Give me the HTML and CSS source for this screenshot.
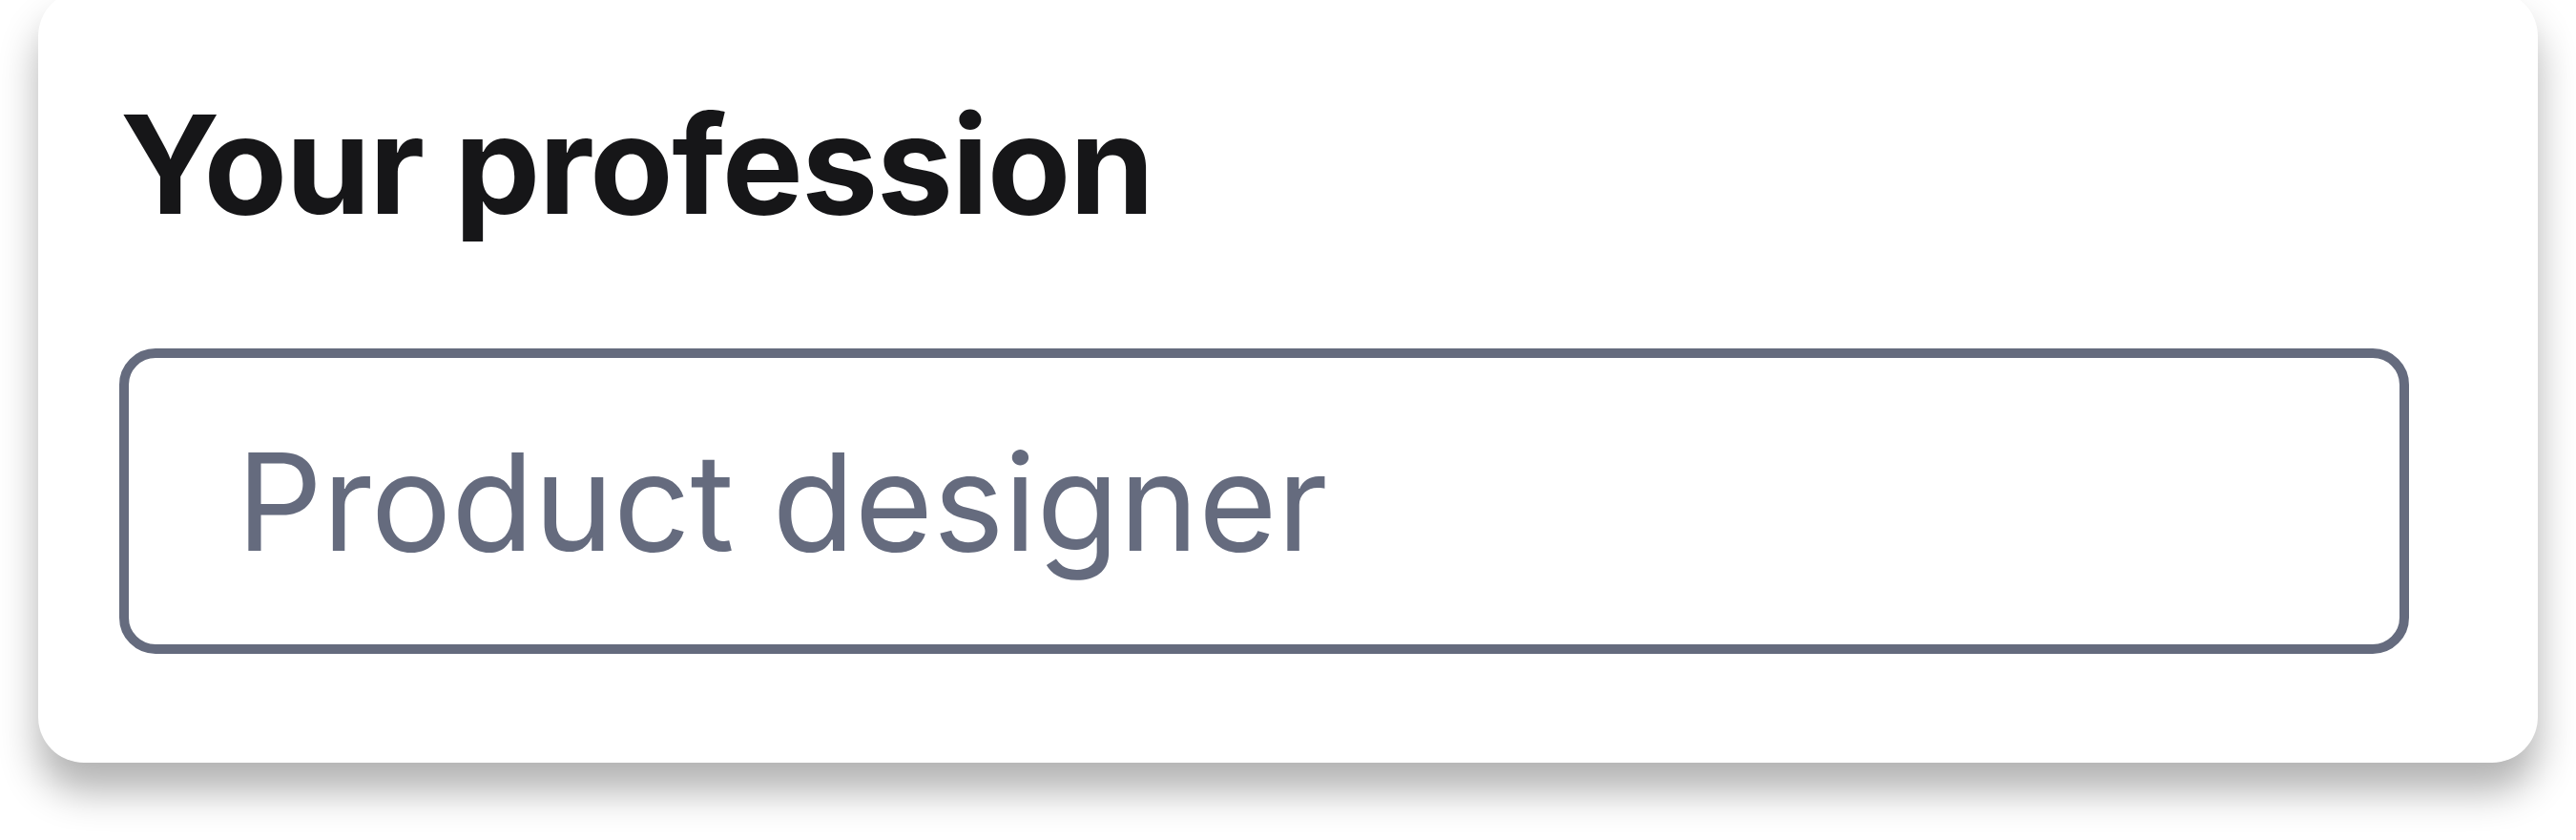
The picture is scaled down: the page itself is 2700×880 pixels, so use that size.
FILE: index.html
```html
<!DOCTYPE html>
<html lang="en">
<head>
<meta charset="utf-8">
<title>Your profession</title>
<link rel="stylesheet" href="styles.css">
</head>
<body>
  <div class="card">
    <h1 class="title">Your profession</h1>
    <div class="field">
      <span class="placeholder">Product designer</span>
    </div>
  </div>
</body>
</html>
```
FILE: styles.css
```css
html, body {
  margin: 0;
  padding: 0;
  background: #ffffff;
  width: 2700px;
  height: 880px;
  overflow: hidden;
}
body {
  font-family: Inter, "Noto Sans", sans-serif;
}
.card {
  box-sizing: border-box;
  margin: -10px 40px 0 40px;
  height: 809px;
  padding: 110px 0 0 86px;
  background: #ffffff;
  border-radius: 48px;
  box-shadow: 0 30px 40px rgba(0, 0, 0, 0.3);
}
.title {
  margin: 0;
  font-size: 143px;
  line-height: 1;
  font-weight: 700;
  color: #161618;
  letter-spacing: -1.5px;
}
.field {
  box-sizing: border-box;
  margin: 122px 0 0 -1px;
  width: 2400px;
  height: 320px;
  border: 10px solid #656b7e;
  border-radius: 38px;
  display: flex;
  align-items: center;
  padding-left: 113px;
}
.placeholder {
  font-size: 141px;
  line-height: 1;
  font-weight: 400;
  color: #656b7e;
}
```
